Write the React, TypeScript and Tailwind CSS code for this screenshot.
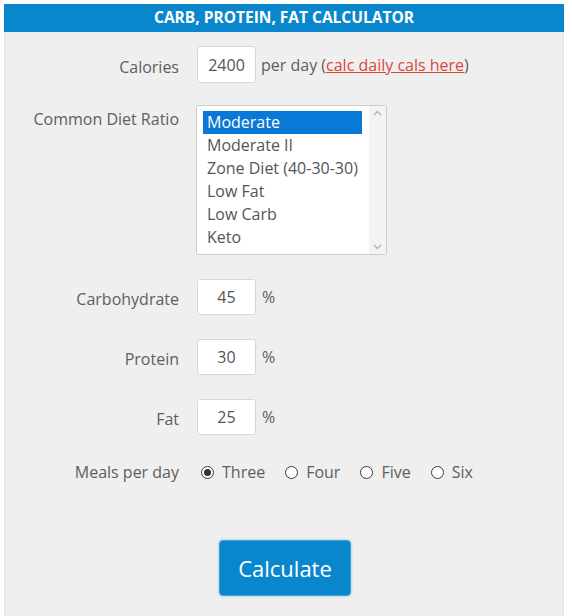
import React, { useState } from "react";

const font = { fontFamily: '"Open Sans", "Liberation Sans", sans-serif' };

function Label({ children, top, flat }: { children: React.ReactNode; top?: boolean; flat?: boolean }) {
  return (
    <div
      className={`w-[174px] shrink-0 text-right text-[16px] text-[#5e5e5e] ${
        top ? "self-start pt-[2px]" : flat ? "" : "pt-[4px]"
      }`}
    >
      {children}
    </div>
  );
}

function NumInput({ value }: { value: string }) {
  return (
    <div className="flex h-[36px] w-[59px] items-center justify-center rounded-[3px] border border-[#d8d8d8] bg-white text-[16px] text-[#555]">
      {value}
    </div>
  );
}

function Radio({ label, checked }: { label: string; checked?: boolean }) {
  return (
    <div className="flex items-center">
      <span className="ml-[4px] flex h-[13px] w-[13px] items-center justify-center rounded-full border border-[#3a3a3a] bg-white">
        {checked && <span className="h-[7px] w-[7px] rounded-full bg-[#333]" />}
      </span>
      <span className="ml-[8px] text-[16px] text-[#5e5e5e]">{label}</span>
    </div>
  );
}

export default function App() {
  const [sel] = useState(0);
  const options = ["Moderate", "Moderate II", "Zone Diet (40-30-30)", "Low Fat", "Low Carb", "Keto"];
  return (
    <div className="min-h-[616px] bg-white pt-[4px]" style={font}>
      <div className="ml-[4px] w-[560px]">
        <div className="flex h-[28px] items-center justify-center bg-[#0a87cc] text-[15.5px] font-bold text-white">
          CARB, PROTEIN, FAT CALCULATOR
        </div>
        <div className="border-x border-[#e6e6e6] bg-[#efefef] pb-[40px] pt-[14px]">
          {/* Calories */}
          <div className="flex items-center">
            <Label>Calories</Label>
            <div className="ml-[18px] flex items-center">
              <div className="flex h-[37px] w-[59px] items-center justify-center rounded-[3px] border border-[#d8d8d8] bg-white text-[16px] text-[#555]">
                2400
              </div>
              <span className="ml-[5px] text-[16px] text-[#5e5e5e]">
                per day (<a className="text-[#d9473b] underline" href="#">calc daily cals here</a>)
              </span>
            </div>
          </div>

          {/* Diet ratio */}
          <div className="mt-[22px] flex">
            <Label top>Common Diet Ratio</Label>
            <div className="ml-[17px] flex h-[150px] w-[191px] rounded-[2px] border border-[#cfcfcf] bg-white">
              <div className="flex-1 pl-[6px] pr-[7px] pt-[5px]">
                {options.map((o, i) => (
                  <div
                    key={o}
                    className={`h-[23px] pl-[4px] text-[16px] leading-[23px] ${i === sel ? "bg-[#0a78d7] text-white" : "text-[#555]"}`}
                  >
                    {o}
                  </div>
                ))}
              </div>
              <div className="flex w-[17px] flex-col items-center justify-between bg-[#f3f3f3] py-[4px]">
                <svg width="9" height="6" viewBox="0 0 9 6"><path d="M1 5 L4.5 1.5 L8 5" fill="none" stroke="#b0b0b0" strokeWidth="1.3" /></svg>
                <svg width="9" height="6" viewBox="0 0 9 6"><path d="M1 1 L4.5 4.5 L8 1" fill="none" stroke="#b0b0b0" strokeWidth="1.3" /></svg>
              </div>
            </div>
          </div>

          {[
            ["Carbohydrate", "45"],
            ["Protein", "30"],
            ["Fat", "25"],
          ].map(([l, v]) => (
            <div key={l} className="mt-[24px] flex items-center">
              <Label>{l}</Label>
              <div className="ml-[18px] flex items-center">
                <NumInput value={v} />
                <span className="ml-[6px] text-[16px] text-[#5e5e5e]">%</span>
              </div>
            </div>
          ))}

          {/* Meals */}
          <div className="mt-[25px] flex h-[24px] items-center">
            <Label flat>Meals per day</Label>
            <div className="ml-[18px] flex items-center gap-[16px]">
              <Radio label="Three" checked />
              <Radio label="Four" />
              <Radio label="Five" />
              <Radio label="Six" />
            </div>
          </div>

          <div className="mt-[56px] flex">
            <button className="ml-[214px] h-[56px] w-[132px] rounded-[4px] border border-[#3aa0dc] bg-[#0a87cc] text-[22px] text-white shadow-[0_0_3px_rgba(10,135,204,0.4)]">
              Calculate
            </button>
          </div>
        </div>
      </div>
    </div>
  );
}
